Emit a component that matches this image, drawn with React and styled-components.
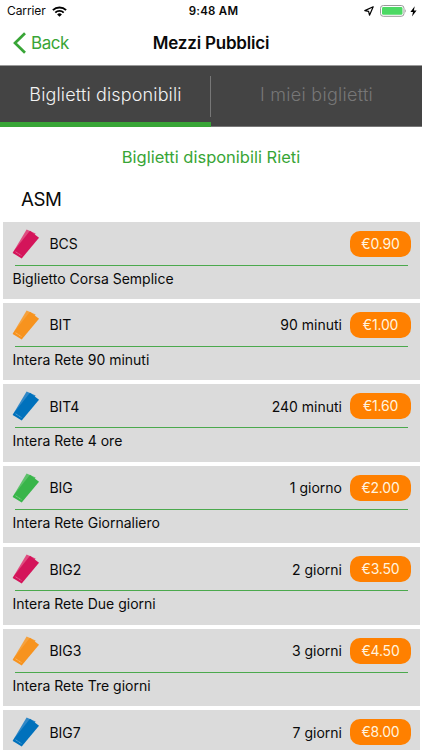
import React from "react";
import styled, { createGlobalStyle } from "styled-components";

const GlobalStyle = createGlobalStyle`
  * { box-sizing: border-box; }
  html, body { margin: 0; height: 100%; overflow: hidden; background: #fff; }
  body { font-family: Inter, "Liberation Sans", sans-serif; color: #0a0a0a; }
`;

const Screen = styled.div`
  width: 422px;
  height: 750px;
  overflow: hidden;
  display: flex;
  flex-direction: column;
  background: #fff;
`;

const StatusBar = styled.div`
  height: 22px;
  flex: none;
  display: grid;
  grid-template-columns: 1fr auto 1fr;
  align-items: center;
  padding: 0 5px 0 7px;
  font-size: 12px;
  letter-spacing: -0.1px;
  line-height: 22px;
`;

const StatusGroup = styled.div`
  display: flex;
  align-items: center;
  gap: ${(p) => p.$gap}px;
  justify-content: ${(p) => (p.$end ? "flex-end" : "flex-start")};
`;

const Clock = styled.div`
  font-weight: 600;
  font-size: 11.5px;
  letter-spacing: 0.25px;
  padding-left: 3px;
`;

const NavBar = styled.div`
  height: 44px;
  flex: none;
  display: grid;
  grid-template-columns: 1fr auto 1fr;
  align-items: center;
  padding: 0 12px 1px;
  border-bottom: 1px solid #9a9a9a;
`;

const BackButton = styled.button`
  display: flex;
  align-items: center;
  gap: 5px;
  padding: 0;
  border: 0;
  background: none;
  font: 400 17px Inter, sans-serif;
  letter-spacing: -0.45px;
  color: #38a536;
`;

const Title = styled.h1`
  margin: 0;
  font-size: 17px;
  font-weight: 600;
  letter-spacing: -0.2px;
`;

const Tabs = styled.div`
  height: 61px;
  flex: none;
  display: grid;
  grid-template-columns: 211px 211px;
  background: #444;
`;

const Tab = styled.div`
  display: flex;
  align-items: center;
  justify-content: center;
  padding-bottom: ${(p) => (p.$active ? 0 : 4)}px;
  border-bottom: ${(p) => (p.$active ? "5px solid #38a536" : "1px solid #777")};
  font-size: 18px;
  font-weight: 300;
  letter-spacing: ${(p) => (p.$active ? 0.15 : 0.28)}px;
  line-height: 21px;
  color: ${(p) => (p.$active ? "#f2f2f2" : "#777")};
  position: relative;

  &:first-child::after {
    content: "";
    position: absolute;
    right: 0;
    top: 10px;
    width: 1px;
    height: 41px;
    background: #777;
  }
`;

const Subtitle = styled.div`
  height: 61px;
  flex: none;
  text-align: center;
  font-size: 16.5px;
  line-height: 61px;
  color: #38a536;
`;

const Operator = styled.h2`
  margin: 0;
  height: 33.5px;
  flex: none;
  padding-left: 21px;
  font-size: 18.7px;
  letter-spacing: -0.5px;
  font-weight: 400;
  line-height: 23px;
`;

const TicketList = styled.div`
  display: flex;
  flex-direction: column;
  gap: 4.3px;
  padding: 0 2.5px;
`;

const Card = styled.div`
  height: 77.2px;
  flex: none;
  padding: 0 8.5px 0 9.5px;
  background: #dbdbdb;
  font-size: 14px;
`;

const CardHead = styled.div`
  height: 44px;
  display: flex;
  align-items: center;
`;

const Code = styled.div`
  flex: 1;
  padding-left: 9.5px;
  letter-spacing: -0.05px;
`;

const Duration = styled.div`
  padding-right: 8px;
`;

const Price = styled.div`
  width: 61px;
  height: 26px;
  border-radius: 10px;
  background: #ff8000;
  color: #fff3df;
  text-align: center;
  line-height: 26px;
  letter-spacing: -0.2px;
`;

const Rule = styled.div`
  height: 1px;
  margin: -1px 3.5px 0 2.5px;
  background: #4ba94d;
`;

const Description = styled.div`
  padding-left: 0.5px;
  line-height: 26px;
`;

const TicketIcon = ({ color, back }) => (
  <svg width="28" height="30" viewBox="0 0 28 30">
    <path d="M14.6 0.5 L23.6 4.6 L11 27 L0.7 23.8Z" fill={back} />
    <path d="M18 1.8 L27 8.7 L9.7 29.5 L0.7 24 L3 20.5Z" fill={color} />
    <path d="M3.6 22.8 L9.4 26.5" stroke="#fff" strokeOpacity="0.45" strokeWidth="0.8" strokeDasharray="1.5 0.5" />
  </svg>
);

const palette = {
  pink: ["#d4145a", "#df4d80"],
  orange: ["#f7931e", "#f5a13d"],
  blue: ["#0071bc", "#3088c7"],
  green: ["#39b54a", "#5ec16b"],
};

const tickets = [
  ["pink", "BCS", "", "€0.90", "Biglietto Corsa Semplice"],
  ["orange", "BIT", "90 minuti", "€1.00", "Intera Rete 90 minuti"],
  ["blue", "BIT4", "240 minuti", "€1.60", "Intera Rete 4 ore"],
  ["green", "BIG", "1 giorno", "€2.00", "Intera Rete Giornaliero"],
  ["pink", "BIG2", "2 giorni", "€3.50", "Intera Rete Due giorni"],
  ["orange", "BIG3", "3 giorni", "€4.50", "Intera Rete Tre giorni"],
  ["blue", "BIG7", "7 giorni", "€8.00", ""],
];

const Wifi = () => (
  <svg width="15" height="11" viewBox="0 0 15 11">
    <g fill="none" stroke="#000" strokeWidth="1.9">
      <path d="M0.9 4.2 A9.3 9.3 0 0 1 14.1 4.2" />
      <path d="M3.3 6.6 A6 6 0 0 1 11.7 6.6" />
    </g>
    <path d="M7.5 10.8 L5.1 8.4 A3.5 3.5 0 0 1 9.9 8.4Z" />
  </svg>
);

const Location = () => (
  <svg width="10" height="10" viewBox="0 0 10 10">
    <path d="M9.2 0.8 L0.8 4.6 L4.6 5.3 L5.5 9.2Z" fill="none" stroke="#000" strokeWidth="1.2" strokeLinejoin="round" />
  </svg>
);

const Battery = () => (
  <svg width="27" height="12" viewBox="0 0 27 12">
    <rect x="0.5" y="0.5" width="23.5" height="10.8" rx="2.8" fill="#fff" stroke="#999" />
    <rect x="2" y="2" width="20.5" height="7.8" rx="1.4" fill="#4cd964" />
    <path d="M25.3 4 Q26.8 5.9 25.3 7.8Z" fill="#888" />
  </svg>
);

const Bolt = () => (
  <svg width="7" height="11" viewBox="0 0 7 11">
    <path d="M4.7 0.3 L0.4 6 H3 L2 10.6 L6.6 4.6 H3.9Z" />
  </svg>
);

export default function App() {
  return (
    <Screen>
      <GlobalStyle />
      <StatusBar>
        <StatusGroup $gap={6}>
          <span>Carrier</span>
          <Wifi />
        </StatusGroup>
        <Clock>9:48 AM</Clock>
        <StatusGroup $gap={3} $end>
          <Location />
          <span />
          <Battery />
          <Bolt />
        </StatusGroup>
      </StatusBar>
      <NavBar>
        <BackButton>
          <svg width="14" height="22" viewBox="0 0 14 22">
            <path d="M13 1.2 L3 11 L13 20.8" fill="none" stroke="#38a536" strokeWidth="2.7" />
          </svg>
          Back
        </BackButton>
        <Title>Mezzi Pubblici</Title>
      </NavBar>
      <Tabs>
        <Tab $active>Biglietti disponibili</Tab>
        <Tab>I miei biglietti</Tab>
      </Tabs>
      <Subtitle>Biglietti disponibili Rieti</Subtitle>
      <Operator>ASM</Operator>
      <TicketList>
        {tickets.map(([tone, code, duration, price, text]) => (
          <Card key={code}>
            <CardHead>
              <TicketIcon color={palette[tone][0]} back={palette[tone][1]} />
              <Code>{code}</Code>
              <Duration>{duration}</Duration>
              <Price>{price}</Price>
            </CardHead>
            <Rule />
            <Description>{text}</Description>
          </Card>
        ))}
      </TicketList>
    </Screen>
  );
}
